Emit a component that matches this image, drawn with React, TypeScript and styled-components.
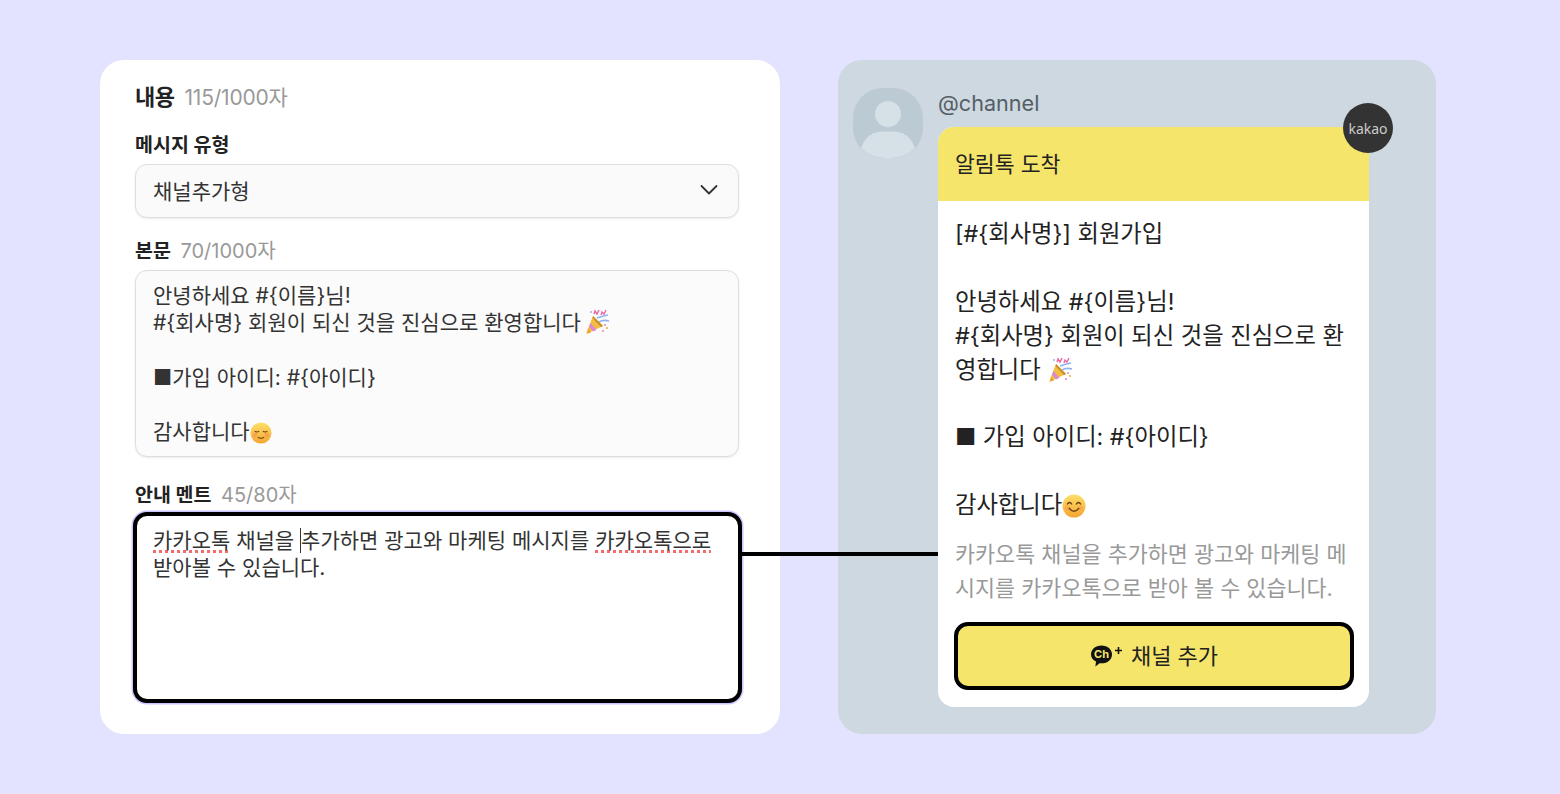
import React from 'react';
import styled, { createGlobalStyle } from 'styled-components';

const GlobalStyle = createGlobalStyle`
  html, body {
    margin: 0;
    padding: 0;
    background: #e4e3ff;
  }
  * {
    box-sizing: border-box;
  }
  body {
    font-family: Inter, 'Noto Sans CJK KR', sans-serif;
    color: #222;
  }
`;

const PartyPopper = () => (
  <svg width="26" height="26" viewBox="0 0 26 26">
    <path d="M9 7 L19 17 L2 25 Z" fill="#f3bd3f" />
    <path d="M6.5 14 L12.5 21 L9 22.6 L5 17.6 Z" fill="#d98ad6" />
    <path d="M4 19.5 L7 23.4 L3.6 24.6 Z" fill="#e7a32e" />
    <path d="M9 7 L19 17 L17 18 L8.5 9 Z" fill="#c98a2a" />
    <path d="M13 9 C16 8 18 7 24 6" stroke="#8fb3ee" strokeWidth="1.6" fill="none" />
    <path d="M15 13 C18 11 21 11 25 12" stroke="#8fb3ee" strokeWidth="1.6" fill="none" />
    <path d="M10 5 L11 2 L13 5 L15 1" stroke="#e86ba6" strokeWidth="1.5" fill="none" />
    <path d="M17 6 L18 3 L20 5 L22 1" stroke="#e86ba6" strokeWidth="1.4" fill="none" />
    <circle cx="21" cy="16" r="1.1" fill="#ef8fb0" />
    <circle cx="23" cy="19" r="1.1" fill="#e9b04c" />
    <circle cx="19" cy="22" r="1.1" fill="#ef8fb0" />
    <circle cx="7" cy="3" r="1" fill="#8fb3ee" />
  </svg>
);

const Face = ({ size, blush }: { size: number; blush?: boolean }) => (
  <svg width={size} height={size} viewBox="0 0 24 24">
    <defs>
      <linearGradient id={blush ? 'faceA' : 'faceB'} x1="0" y1="0" x2="0" y2="1">
        <stop offset="0" stopColor="#fde06a" />
        <stop offset="1" stopColor="#f5a531" />
      </linearGradient>
    </defs>
    <circle cx="12" cy="12" r="11.5" fill={`url(#${blush ? 'faceA' : 'faceB'})`} />
    {blush ? (
      <>
        <circle cx="5.5" cy="14" r="2.6" fill="#f58a5c" opacity="0.5" />
        <circle cx="18.5" cy="14" r="2.6" fill="#f58a5c" opacity="0.5" />
        <path d="M5 10 Q7.5 11.8 10 10 M14 10 Q16.5 11.8 19 10" stroke="#6b3f12" strokeWidth="1.1" fill="none" />
        <path d="M8.5 16.5 Q12 19 15.5 16.5" stroke="#6b3f12" strokeWidth="1.1" fill="none" />
      </>
    ) : (
      <>
        <circle cx="5.5" cy="14" r="2.6" fill="#f58a5c" opacity="0.4" />
        <circle cx="18.5" cy="14" r="2.6" fill="#f58a5c" opacity="0.4" />
        <path d="M5 10.5 Q7.5 6.5 10 10.5 M14 10.5 Q16.5 6.5 19 10.5" stroke="#6b3f12" strokeWidth="1.3" fill="none" />
        <path d="M7 14 Q12 20.5 17 14" stroke="#6b3f12" strokeWidth="1.4" fill="none" />
      </>
    )}
  </svg>
);

const ChannelAddIcon = () => (
  <svg width="34" height="26" viewBox="0 0 34 26">
    <path d="M11.5 2.5 C17.6 2.5 22 6.4 22 11.4 C22 16.4 17.6 20.3 11.5 20.3 C10.8 20.3 10.2 20.3 9.6 20.2 L5.4 23.6 L6 18.6 C3 17 1 14.4 1 11.4 C1 6.4 5.4 2.5 11.5 2.5 Z" fill="#111" />
    <text x="11.5" y="15" textAnchor="middle" fontSize="11" fontWeight="700" fill="#f5e56b" fontFamily="Inter, sans-serif">
      Ch
    </text>
    <path d="M25 7.5 H32 M28.5 4 V11" stroke="#111" strokeWidth="1.6" />
  </svg>
);

const SelectArrow = () => (
  <svg width="20" height="12" viewBox="0 0 20 12">
    <path d="M2.5 2 L10 9.5 L17.5 2" stroke="#333" strokeWidth="1.8" fill="none" strokeLinecap="round" strokeLinejoin="round" />
  </svg>
);

const Avatar = () => (
  <AvatarBox>
    <svg width="70" height="70" viewBox="0 0 70 70">
      <circle cx="35" cy="26" r="13" fill="#d6e0e7" />
      <path d="M8 60 C14 44 24 43.5 35 43.5 C46 43.5 56 44 62 60 C54 68 46 70 35 70 C24 70 16 68 8 60 Z" fill="#d6e0e7" />
    </svg>
  </AvatarBox>
);

export default function App() {
  return (
    <>
      <GlobalStyle />
      <Page>
        <EditorCard>
          <CardTitle>
            내용 <Count>115/1000자</Count>
          </CardTitle>
          <Field>
            <FieldLabel>메시지 유형</FieldLabel>
            <SelectBox>
              채널추가형
              <SelectArrow />
            </SelectBox>
          </Field>
          <BodyField>
            <FieldLabel>
              본문 <SmallCount>70/1000자</SmallCount>
            </FieldLabel>
            <TextBox>
              안녕하세요 #{'{'}이름{'}'}님!
              <br />
              #{'{'}회사명{'}'} 회원이 되신 것을 진심으로 환영합니다{' '}
              <PopperEmoji>
                <PartyPopper />
              </PopperEmoji>
              <br />
              <br />
              ■가입 아이디: #{'{'}아이디{'}'}
              <br />
              <br />
              감사합니다
              <InlineEmoji>
                <Face size={22} blush />
              </InlineEmoji>
            </TextBox>
          </BodyField>
          <GuideField>
            <FieldLabel>
              안내 멘트 <SmallCount>45/80자</SmallCount>
            </FieldLabel>
            <FocusedBox>
              <Misspelled>카카오톡</Misspelled> 채널을 <Caret />
              추가하면 광고와 마케팅 메시지를 <Misspelled>카카오톡으로</Misspelled>
              <br />
              받아볼 수 있습니다.
              <Connector />
            </FocusedBox>
          </GuideField>
        </EditorCard>

        <PreviewCard>
          <Avatar />
          <ChatColumn>
            <ChannelName>@channel</ChannelName>
            <Bubble>
              <KakaoBadge>kakao</KakaoBadge>
              <BubbleHeader>알림톡 도착</BubbleHeader>
              <BubbleBody>
                <Message>
                  [#{'{'}회사명{'}'}] 회원가입
                  <br />
                  <br />
                  안녕하세요 #{'{'}이름{'}'}님!
                  <br />
                  #{'{'}회사명{'}'} 회원이 되신 것을 진심으로 환
                  <br />
                  영합니다{' '}
                  <InlineEmoji>
                    <PartyPopper />
                  </InlineEmoji>
                  <br />
                  <br />■ 가입 아이디: #{'{'}아이디{'}'}
                  <br />
                  <br />
                  감사합니다
                  <InlineEmoji>
                    <Face size={24} />
                  </InlineEmoji>
                </Message>
                <GuideText>
                  카카오톡 채널을 추가하면 광고와 마케팅 메
                  <br />
                  시지를 카카오톡으로 받아 볼 수 있습니다.
                </GuideText>
                <AddButton>
                  <ChannelAddIcon />
                  채널 추가
                </AddButton>
              </BubbleBody>
            </Bubble>
          </ChatColumn>
        </PreviewCard>
      </Page>
    </>
  );
}

const Page = styled.div`
  width: 1560px;
  height: 794px;
  padding: 60px 124px 60px 100px;
  display: flex;
  gap: 58px;
  background: #e4e3ff;
  overflow: hidden;
`;

const EditorCard = styled.section`
  width: 680px;
  height: 674px;
  background: #fff;
  border-radius: 24px;
  padding: 21px 41px 0 35px;
`;

const CardTitle = styled.div`
  font-size: 22px;
  font-weight: 700;
  line-height: 33px;
  color: #222;
  letter-spacing: -0.4px;
`;

const Count = styled.span`
  font-size: 21px;
  font-weight: 400;
  color: #999;
  margin-left: 5px;
  letter-spacing: -0.2px;
`;

const Field = styled.div`
  margin-top: 18px;
`;

const BodyField = styled(Field)`
  margin-top: 20px;
`;

const GuideField = styled(Field)`
  margin-top: 25px;
`;

const FieldLabel = styled.div`
  font-size: 19.5px;
  font-weight: 700;
  line-height: 27px;
  color: #222;
  margin-bottom: 5px;
`;

const SmallCount = styled.span`
  font-size: 20px;
  font-weight: 400;
  color: #999;
  margin-left: 5px;
`;

const SelectBox = styled.div`
  height: 54px;
  border: 1.5px solid #dedede;
  border-radius: 12px;
  background: #fafafa;
  box-shadow: 0 1px 2px rgba(0, 0, 0, 0.08);
  padding: 0 19px 2px 17px;
  display: flex;
  align-items: center;
  justify-content: space-between;
  font-size: 21px;
  color: #333;
`;

const TextBox = styled.div`
  height: 187px;
  border: 1.5px solid #dedede;
  border-radius: 12px;
  background: #fbfbfb;
  box-shadow: 0 1px 2px rgba(0, 0, 0, 0.08);
  padding: 11px 17px;
  font-size: 21px;
  line-height: 27.2px;
  color: #333;
`;

const InlineEmoji = styled.span`
  display: inline-block;
  height: 0;
  vertical-align: baseline;
  & > svg {
    vertical-align: -5px;
  }
`;

const PopperEmoji = styled(InlineEmoji)`
  margin-left: -3px;
`;

const FocusedBox = styled.div`
  position: relative;
  width: 609px;
  height: 191px;
  margin: -2px 0 0 -2px;
  border: 4px solid #000;
  border-radius: 14px;
  background: #fff;
  box-shadow: 0 0 0 1.5px #c9c6ff;
  padding: 11px 16px;
  font-size: 21px;
  line-height: 27.2px;
  color: #333;
`;

const Misspelled = styled.span`
  text-decoration: underline dotted #f56a6a 3px;
  text-underline-offset: 2px;
`;

const Caret = styled.span`
  display: inline-block;
  width: 1px;
  height: 25px;
  background: #333;
  vertical-align: -5px;
`;

const Connector = styled.span`
  position: absolute;
  left: 605px;
  top: 36px;
  width: 196px;
  height: 4px;
  background: #000;
`;

const PreviewCard = styled.section`
  width: 598px;
  height: 674px;
  background: #ced8e0;
  border-radius: 24px;
  padding: 28px 0 0 15px;
  display: flex;
  gap: 15px;
  align-items: flex-start;
`;

const AvatarBox = styled.div`
  width: 70px;
  height: 70px;
  background: #bccad3;
  border-radius: 30px;
  overflow: hidden;
  flex: none;
  & > svg {
    display: block;
  }
`;

const ChatColumn = styled.div`
  width: 431px;
`;

const ChannelName = styled.div`
  font-size: 21.6px;
  line-height: 30px;
  color: #555e66;
  margin-bottom: 9px;
`;

const Bubble = styled.div`
  position: relative;
  height: 580px;
  background: #fff;
  border-radius: 16px;
`;

const KakaoBadge = styled.div`
  position: absolute;
  top: -24px;
  right: -24px;
  width: 50px;
  height: 50px;
  border-radius: 50%;
  background: #333;
  color: #ccc;
  display: flex;
  align-items: center;
  justify-content: center;
  font-family: 'Noto Sans', sans-serif;
  font-size: 14px;
`;

const BubbleHeader = styled.div`
  height: 74px;
  background: #f5e56b;
  border-radius: 16px 16px 0 0;
  padding: 0 17px 4px;
  display: flex;
  align-items: center;
  font-size: 21.6px;
  color: #222;
`;

const BubbleBody = styled.div`
  padding: 16px 15px 0 17px;
`;

const Message = styled.div`
  font-size: 23.3px;
  line-height: 33.9px;
  color: #222;
  white-space: nowrap;
`;

const GuideText = styled.div`
  margin-top: 15px;
  font-size: 21.8px;
  line-height: 34px;
  color: #999;
  white-space: nowrap;
`;

const AddButton = styled.div`
  margin: 17px 0 0 -1px;
  width: 400px;
  height: 68px;
  border: 4px solid #000;
  border-radius: 14px;
  background: #f5e56b;
  padding-bottom: 4px;
  display: flex;
  align-items: center;
  justify-content: center;
  gap: 7px;
  font-size: 22px;
  color: #222;
  & > svg {
    margin-top: 4px;
  }
`;
